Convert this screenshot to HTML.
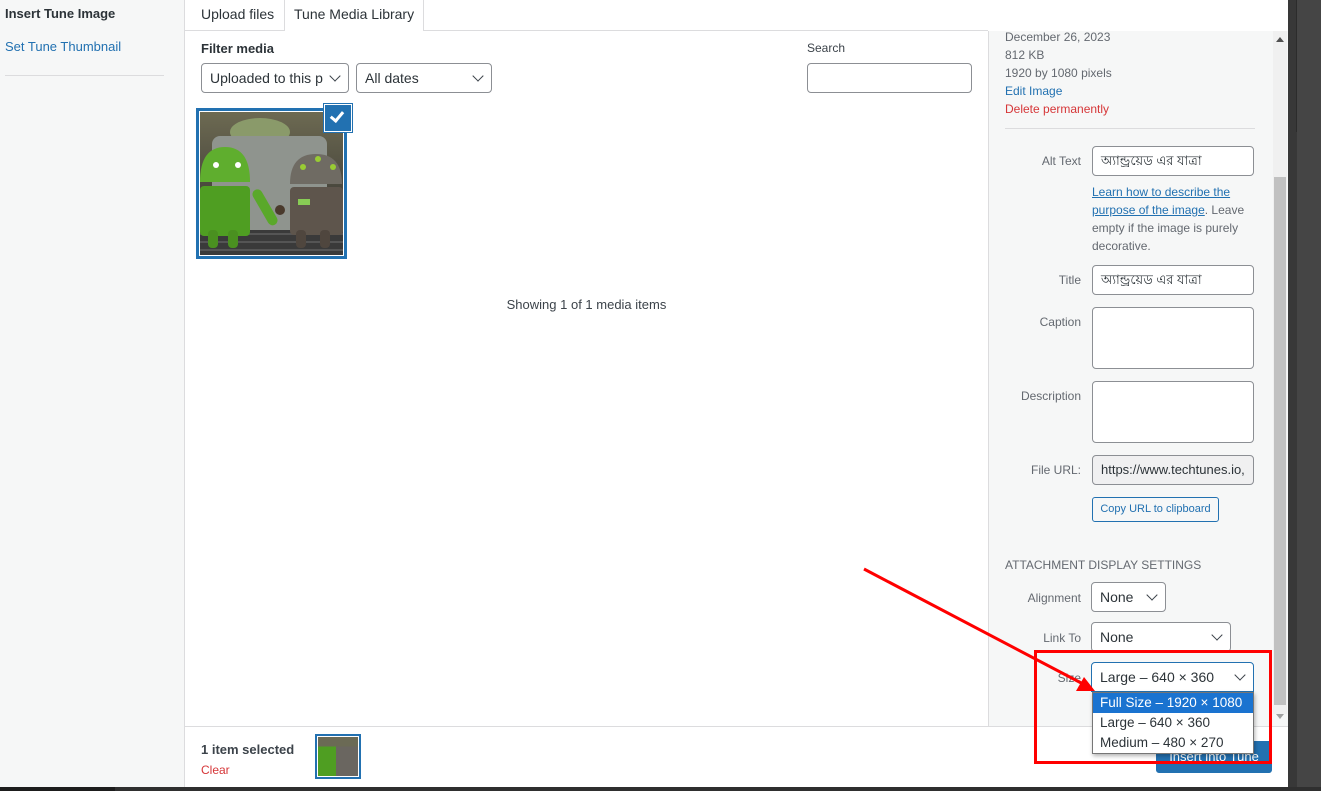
<!DOCTYPE html>
<html><head><meta charset="utf-8"><style>
*{box-sizing:border-box;margin:0;padding:0}
body{width:1321px;height:791px;overflow:hidden;background:#fff;font-family:"Liberation Sans","Noto Sans CJK SC",sans-serif;font-size:13px;color:#3c434a;position:relative}
.a{position:absolute}
.lbl{position:absolute;font-size:12px;color:#646970;text-align:right;width:80px}
.in{position:absolute;background:#fff;border:1px solid #8c8f94;border-radius:4px;font-size:13px;color:#2c3338;padding:0 8px;line-height:28px;white-space:nowrap;overflow:hidden}
.chev{position:absolute;right:9px;top:8px;width:8px;height:8px;border-right:1.6px solid #3c434a;border-bottom:1.6px solid #3c434a;transform:rotate(45deg)}
.bn{font-family:"Liberation Sans","Noto Sans CJK SC",sans-serif}
</style></head><body>
<div class="a" style="left:0;top:0;width:185px;height:787px;background:#f6f7f7;border-right:1px solid #dcdcde"></div>
<div class="a" style="left:5px;top:6px;font-size:13px;font-weight:bold;color:#2c3338">Insert Tune Image</div>
<div class="a" style="left:5px;top:39px;font-size:13px;color:#2271b1">Set Tune Thumbnail</div>
<div class="a" style="left:5px;top:75px;width:159px;height:1px;background:#dcdcde"></div>
<div class="a" style="left:185px;top:30px;width:803px;height:1px;background:#dcdcde"></div>
<div class="a" style="left:201px;top:6px;font-size:14px;color:#2c3338">Upload files</div>
<div class="a" style="left:284px;top:0;width:140px;height:31px;background:#fff;border:1px solid #dcdcde;border-top:none;border-bottom:none"></div>
<div class="a" style="left:294px;top:6px;font-size:14px;color:#2c3338">Tune Media Library</div>
<div class="a" style="left:201px;top:41px;font-size:13px;font-weight:bold;color:#2c3338">Filter media</div>
<div class="in" style="left:201px;top:63px;width:148px;height:30px;padding-right:24px;font-size:14px">Uploaded to this p<div class="chev"></div></div>
<div class="in" style="left:356px;top:63px;width:136px;height:30px;font-size:14px">All dates<div class="chev"></div></div>
<div class="a" style="left:807px;top:41px;font-size:12px;color:#3c434a">Search</div>
<div class="in" style="left:807px;top:63px;width:165px;height:30px"></div>
<div class="a" style="left:196px;top:108px;width:151px;height:151px;border:3px solid #2271b1;background:#fff;padding:1px">
 <svg width="143" height="143" viewBox="0 0 143 143" style="display:block">
  <defs><linearGradient id="bg" x1="0" y1="0" x2="0" y2="1"><stop offset="0" stop-color="#6d6a52"/><stop offset=".5" stop-color="#4c4a3f"/><stop offset="1" stop-color="#2a2a2a"/></linearGradient></defs>
  <rect width="143" height="143" fill="url(#bg)"/>
  <ellipse cx="60" cy="20" rx="30" ry="14" fill="#8a9a6a"/>
  <rect x="12" y="24" width="115" height="95" rx="8" fill="#8f948e"/>
  <rect x="0" y="118" width="143" height="25" fill="#3a3a3a"/>
  <path d="M0 122h143M0 130h143M0 138h143" stroke="#555" stroke-width="2"/>
  <path d="M0 70q0-35 25-35q25 0 25 35z" fill="#5fae2e"/>
  <rect x="0" y="74" width="50" height="50" rx="4" fill="#4f9e22"/>
  <rect x="8" y="118" width="10" height="18" rx="4" fill="#4a9020"/>
  <rect x="28" y="118" width="10" height="18" rx="4" fill="#4a9020"/>
  <rect x="50" y="78" width="10" height="40" rx="5" fill="#5aa82a" transform="rotate(-30 55 78)"/>
  <circle cx="16" cy="53" r="3" fill="#fff"/><circle cx="38" cy="53" r="3" fill="#fff"/>
  <path d="M90 72q0-30 26-30q26 0 26 30z" fill="#6f6b63"/>
  <rect x="90" y="75" width="53" height="48" rx="4" fill="#5e554c"/>
  <rect x="96" y="118" width="10" height="18" rx="4" fill="#4f463e"/>
  <rect x="120" y="118" width="10" height="18" rx="4" fill="#4f463e"/>
  <circle cx="103" cy="55" r="3" fill="#9c3"/><circle cx="118" cy="47" r="3" fill="#9c3"/><circle cx="133" cy="55" r="3" fill="#9c3"/>
  <rect x="98" y="87" width="12" height="6" fill="#8c5"/>
  <circle cx="80" cy="98" r="5" fill="#4a3a2c"/>
 </svg>
</div>
<div class="a" style="left:324px;top:104px;width:28px;height:28px;background:#2271b1;border:1px solid #fff;box-shadow:0 0 0 1px #2271b1"></div>
<div class="a" style="left:333px;top:109px;width:8px;height:13px;border-right:3px solid #fff;border-bottom:3px solid #fff;transform:rotate(40deg)"></div>
<div class="a" style="left:185px;top:297px;width:803px;text-align:center;font-size:13px;color:#3c434a">Showing 1 of 1 media items</div>
<div class="a" style="left:988px;top:31px;width:300px;height:695px;background:#f6f7f7;border-left:1px solid #dcdcde"></div>
<div class="a" style="left:1273px;top:31px;width:14px;height:683px;background:#f0f0f0"></div>
<div class="a" style="left:1274px;top:177px;width:12px;height:528px;background:#c1c1c1"></div>
<div class="a" style="left:1276px;top:37px;width:0;height:0;border-left:4px solid transparent;border-right:4px solid transparent;border-bottom:5px solid #505050"></div>
<div class="a" style="left:1276px;top:714px;width:0;height:0;border-left:4px solid transparent;border-right:4px solid transparent;border-top:5px solid #a0a0a0"></div>
<div class="a" style="left:1005px;top:28px;font-size:12px;line-height:18px;color:#646970">December 26, 2023<br>812 KB<br>1920 by 1080 pixels<br><span style="color:#2271b1">Edit Image</span><br><span style="color:#d63638">Delete permanently</span></div>
<div class="a" style="left:1005px;top:128px;width:250px;height:1px;background:#dcdcde"></div>
<div class="lbl" style="left:1001px;top:154px">Alt Text</div>
<div class="in bn" style="left:1092px;top:146px;width:162px;height:30px">অ্যান্ড্রয়েড এর যাত্রা</div>
<div class="a" style="left:1092px;top:183px;width:165px;font-size:12px;line-height:18px;color:#646970"><span style="color:#2271b1;text-decoration:underline">Learn how to describe the purpose of the image</span>. Leave empty if the image is purely decorative.</div>
<div class="lbl" style="left:1001px;top:273px">Title</div>
<div class="in bn" style="left:1092px;top:265px;width:162px;height:30px">অ্যান্ড্রয়েড এর যাত্রা</div>
<div class="lbl" style="left:1001px;top:315px">Caption</div>
<div class="in" style="left:1092px;top:307px;width:162px;height:62px"></div>
<div class="lbl" style="left:1001px;top:389px">Description</div>
<div class="in" style="left:1092px;top:381px;width:162px;height:62px"></div>
<div class="lbl" style="left:1001px;top:463px">File URL:</div>
<div class="in" style="left:1092px;top:455px;width:162px;height:30px;background:#f0f0f1;color:#2c3338">https://www.techtunes.io,</div>
<div class="a" style="left:1092px;top:497px;width:127px;height:25px;border:1px solid #2271b1;border-radius:3px;font-size:11px;color:#2271b1;line-height:23px;text-align:center;background:#f6f7f7">Copy URL to clipboard</div>
<div class="a" style="left:1005px;top:558px;font-size:12px;color:#646970">ATTACHMENT DISPLAY SETTINGS</div>
<div class="lbl" style="left:1001px;top:591px">Alignment</div>
<div class="in" style="left:1091px;top:582px;width:75px;height:30px;line-height:28px;font-size:14px">None<div class="chev"></div></div>
<div class="lbl" style="left:1001px;top:631px">Link To</div>
<div class="in" style="left:1091px;top:622px;width:140px;height:30px;line-height:28px;font-size:14px">None<div class="chev"></div></div>
<div class="lbl" style="left:1001px;top:671px">Size</div>
<div class="a" style="left:185px;top:726px;width:1103px;height:1px;background:#dcdcde"></div>
<div class="a" style="left:201px;top:742px;font-size:13px;font-weight:bold;color:#3c434a">1 item selected</div>
<div class="a" style="left:201px;top:763px;font-size:12px;color:#d63638">Clear</div>
<div class="a" style="left:315px;top:734px;width:46px;height:45px;border:2px solid #2271b1;background:#fff;padding:1px"><div style="width:100%;height:100%;background:linear-gradient(180deg,#6b6a55 0 25%,transparent 25%),linear-gradient(90deg,#4f9e22 0 45%,#6a6660 45%);"></div></div>
<div class="a" style="left:1156px;top:741px;width:116px;height:32px;background:#2271b1;border-radius:3px;color:#fff;font-size:13px;text-align:center;line-height:32px">Insert into Tune</div>
<div class="in" style="left:1091px;top:662px;width:163px;height:30px;border-color:#2271b1;line-height:28px;font-size:14px;border-bottom-left-radius:0;border-bottom-right-radius:0">Large – 640 × 360<div class="chev"></div></div>
<div class="a" style="left:1092px;top:692px;width:162px;height:62px;background:#fff;border:1px solid #767676;box-shadow:1px 2px 4px rgba(0,0,0,.3);font-size:13.5px;line-height:20px;color:#2c3338">
<div style="background:#1a73d0;color:#fff;padding-left:7px">Full Size – 1920 × 1080</div>
<div style="padding-left:7px">Large – 640 × 360</div>
<div style="padding-left:7px">Medium – 480 × 270</div></div>
<div class="a" style="left:1034px;top:650px;width:238px;height:114px;border:3px solid #f00"></div>
<svg class="a" style="left:0;top:0" width="1321" height="791"><line x1="864" y1="569" x2="1085" y2="685" stroke="#f00" stroke-width="3"/><polygon points="1095,691 1076,691 1084,677" fill="#f00"/></svg>
<div class="a" style="left:1288px;top:0;width:33px;height:791px;background:#454545"></div>
<div class="a" style="left:1288px;top:0;width:9px;height:791px;background:#383838"></div>
<div class="a" style="left:1288px;top:0;width:9px;height:132px;border-right:1px solid #2c2c2c"></div>
<div class="a" style="left:0;top:787px;width:115px;height:4px;background:#1d1d1d"></div>
<div class="a" style="left:115px;top:787px;width:1206px;height:4px;background:#2f2f2f"></div>
</body></html>
